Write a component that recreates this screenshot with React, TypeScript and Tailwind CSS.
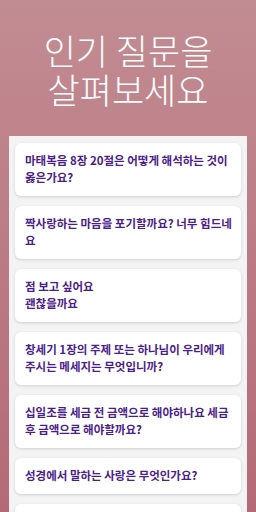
import React from 'react'

const QUESTIONS = [
  '마태복음 8장 20절은 어떻게 해석하는 것이 옳은가요?',
  '짝사랑하는 마음을 포기할까요? 너무 힘드네요',
  '점 보고 싶어요\n괜찮을까요',
  '창세기 1장의 주제 또는 하나님이 우리에게 주시는 메세지는 무엇입니까?',
  '십일조를 세금 전 금액으로 해야하나요 세금 후 금액으로 해야할까요?',
  '성경에서 말하는 사랑은 무엇인가요?',
  '기도는 어떻게 해야 하나요?',
]

export default function App() {
  return (
    <div className="h-[512px] w-[256px] overflow-hidden bg-gradient-to-b from-[#c28c93] to-[#b46a76] font-['Noto_Sans_CJK_KR','Noto_Sans',sans-serif]">
      <h1 className="pt-[30px] text-center text-[35px] font-light leading-[39px] text-white">
        인기 질문을
        <br />
        살펴보세요
      </h1>
      <div className="mx-[9px] mt-[28px] bg-[#f3f3f3] px-[6px] pt-[7px]">
        <ul className="flex flex-col gap-[10px]">
          {QUESTIONS.map((q, i) => (
            <li
              key={i}
              className="whitespace-pre-line rounded-[6px] bg-white pt-[9px] pb-[10px] pl-[10px] pr-[7px] text-[11.5px] font-bold leading-[17px] text-[#4b1d8c] shadow-[0_1px_3px_rgba(0,0,0,0.15)]"
            >
              {q}
            </li>
          ))}
        </ul>
      </div>
    </div>
  )
}
